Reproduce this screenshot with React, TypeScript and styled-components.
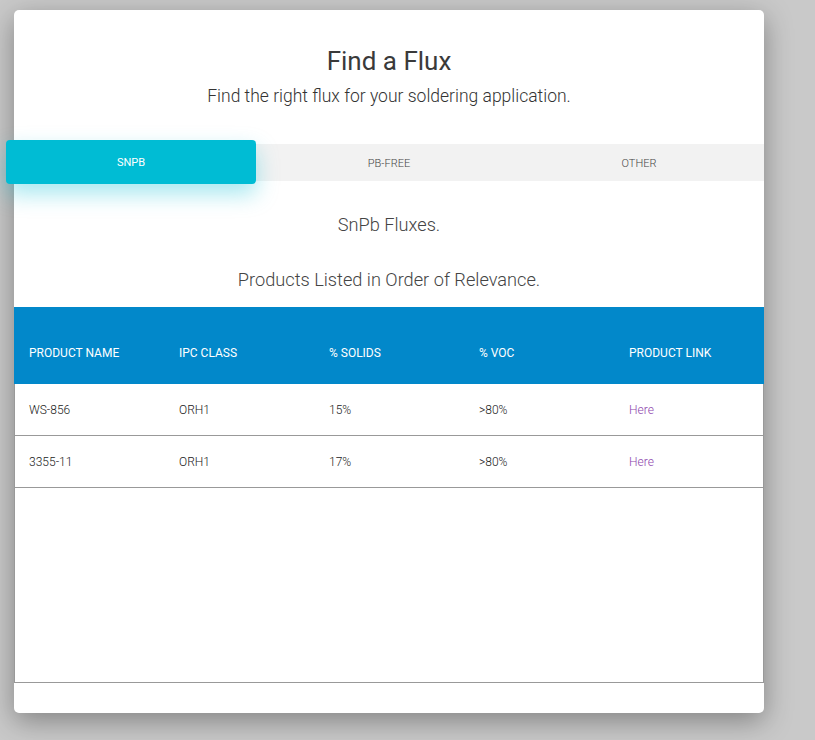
import React from "react";
import styled, { createGlobalStyle } from "styled-components";

const Global = createGlobalStyle`
  html, body { margin: 0; padding: 0; }
  body {
    background: #c9c9c9;
    font-family: Roboto, "Liberation Sans", Arial, sans-serif;
    min-height: 740px;
  }
`;

const Page = styled.div`
  padding: 10px 0 27px 14px;
`;

const Card = styled.div`
  width: 750px;
  background: #fff;
  border-radius: 5px;
  box-shadow: 0 8px 28px rgba(0, 0, 0, 0.35);
  padding: 36px 0 30px;
  display: flex;
  flex-direction: column;
  align-items: stretch;
`;

const Title = styled.h1`
  margin: 0;
  text-align: center;
  font-size: 26px;
  line-height: 30px;
  font-weight: 400;
  color: #3a3a3a;
`;

const Subtitle = styled.p`
  margin: 9px 0 0;
  text-align: center;
  font-size: 17.5px;
  line-height: 22px;
  font-weight: 300;
  color: #333;
`;

const TabBar = styled.div`
  margin-top: 37px;
  height: 37px;
  background: #f2f2f2;
  display: grid;
  grid-template-columns: repeat(3, 1fr);
`;

const Tab = styled.div<{ $active?: boolean }>`
  display: flex;
  align-items: center;
  justify-content: center;
  padding-top: 1px;
  font-size: 11px;
  font-weight: ${(p) => (p.$active ? 400 : 300)};
  text-transform: uppercase;
  color: ${(p) => (p.$active ? "#fff" : "#444")};
  background: ${(p) => (p.$active ? "#00bcd4" : "transparent")};
  border-radius: ${(p) => (p.$active ? "4px" : "0")};
  box-shadow: ${(p) => (p.$active ? "0 10px 22px rgba(0, 188, 212, 0.35)" : "none")};
  margin: ${(p) => (p.$active ? "-4px 8px -3px -8px" : "0")};
  position: relative;
  z-index: ${(p) => (p.$active ? 1 : 0)};
`;

const Lead = styled.p<{ $gap: number }>`
  margin: ${(p) => p.$gap}px 0 0;
  text-align: center;
  font-size: 18.2px;
  line-height: 24px;
  font-weight: 300;
  color: #444;
`;

const TableWrap = styled.div`
  margin-top: 15px;
  min-height: 375px;
  border: 1px solid #999;
  border-top: none;
  display: flex;
  flex-direction: column;
`;

const Grid = styled.div<{ $head?: boolean }>`
  display: grid;
  grid-template-columns: repeat(5, 1fr);
  margin: 0 -1px;
  ${(p) =>
    p.$head
      ? `background: #0288ca; height: 77px; align-items: end; padding-bottom: 24px; box-sizing: border-box;`
      : `height: 52px; align-items: center; border-bottom: 1px solid #999; box-sizing: border-box;`}
`;

const HeadCell = styled.div`
  padding-left: 15px;
  font-size: 12px;
  line-height: 14px;
  color: #fff;
  text-transform: uppercase;
`;

const Cell = styled.div`
  padding-left: 15px;
  font-size: 12px;
  line-height: 14px;
  font-weight: 300;
  color: #222;
`;

const Link = styled.a`
  color: #8e44ad;
  text-decoration: none;
`;

const rows = [
  { name: "WS-856", ipc: "ORH1", solids: "15%", voc: ">80%" },
  { name: "3355-11", ipc: "ORH1", solids: "17%", voc: ">80%" },
];

export default function App() {
  return (
    <>
      <Global />
      <Page>
        <Card>
          <Title>Find a Flux</Title>
          <Subtitle>Find the right flux for your soldering application.</Subtitle>
          <TabBar>
            <Tab $active>SnPb</Tab>
            <Tab>Pb-Free</Tab>
            <Tab>Other</Tab>
          </TabBar>
          <Lead $gap={32}>SnPb Fluxes.</Lead>
          <Lead $gap={31}>Products Listed in Order of Relevance.</Lead>
          <TableWrap>
            <Grid $head>
              <HeadCell>Product Name</HeadCell>
              <HeadCell>IPC Class</HeadCell>
              <HeadCell>% Solids</HeadCell>
              <HeadCell>% VOC</HeadCell>
              <HeadCell>Product Link</HeadCell>
            </Grid>
            {rows.map((r) => (
              <Grid key={r.name}>
                <Cell>{r.name}</Cell>
                <Cell>{r.ipc}</Cell>
                <Cell>{r.solids}</Cell>
                <Cell>{r.voc}</Cell>
                <Cell>
                  <Link href="#">Here</Link>
                </Cell>
              </Grid>
            ))}
          </TableWrap>
        </Card>
      </Page>
    </>
  );
}
